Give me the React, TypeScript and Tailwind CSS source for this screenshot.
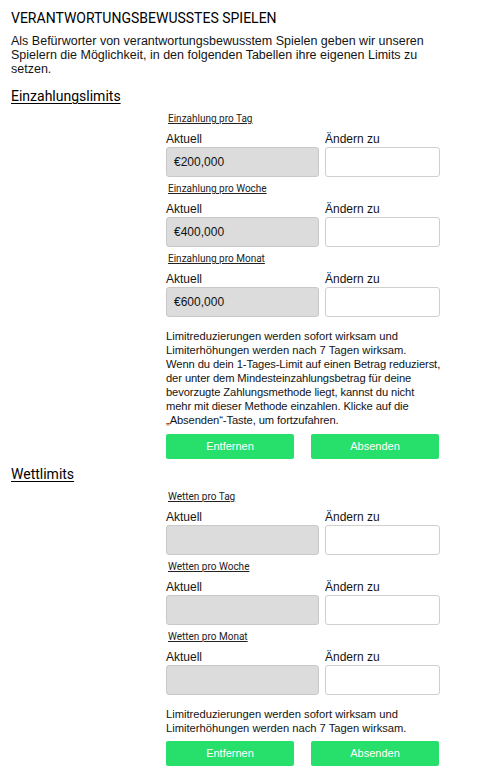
const roboto = { fontFamily: 'Roboto, "Liberation Sans", sans-serif' };

type Row = { label: string; current: string };

const LimitBlock = ({ label, current }: Row) => (
  <div className="pb-[5px]">
    <div className="pl-[2px] text-[10px] leading-[14px] underline text-[#222]" style={roboto}>
      {label}
    </div>
    <div className="mt-[6px] grid grid-cols-[153px_115px] gap-x-[6px] text-[12px] leading-[14px]">
      <div>Aktuell</div>
      <div>Ändern zu</div>
    </div>
    <div className="mt-[1px] grid grid-cols-[153px_115px] gap-x-[6px]">
      <div className="h-[30px] rounded-[3px] border border-[#c9c9c9] bg-[#dcdcdc] px-[7px] text-[12px] leading-[28px] text-[#111]">
        {current}
      </div>
      <input className="h-[30px] rounded-[3px] border border-[#cfcfcf] bg-white px-[7px] text-[12px] outline-none" />
    </div>
  </div>
);

const Buttons = () => (
  <div className="grid grid-cols-[128px_128px] gap-x-[17px]">
    <button className="h-[25px] rounded-[2px] bg-[#27e06c] text-[11px] font-medium text-white">Entfernen</button>
    <button className="h-[25px] rounded-[2px] bg-[#27e06c] text-[11px] font-medium text-white">Absenden</button>
  </div>
);

const Heading = ({ children, className }: { children: string; className: string }) => (
  <h2 className={`text-[14px] leading-[18px] text-black underline underline-offset-[2px] ${className}`} style={roboto}>
    {children}
  </h2>
);

const Note = ({ className = '' }: { className?: string }) => (
  <p className={`whitespace-nowrap text-[11.2px] leading-[14px] ${className}`}>
    Limitreduzierungen werden sofort wirksam und
    <br />
    Limiterhöhungen werden nach 7 Tagen wirksam.
  </p>
);

export default function App() {
  return (
    <div className="min-h-[772px] bg-white px-[11px] pt-[9px] text-[#141414]" style={{ fontFamily: '"Liberation Sans", Arial, sans-serif' }}>
      <h1 className="text-[14px] leading-[18px] text-black" style={roboto}>
        VERANTWORTUNGSBEWUSSTES SPIELEN
      </h1>
      <p className="mt-[7px] w-[430px] text-[12.5px] leading-[14px]">
        Als Befürworter von verantwortungsbewusstem Spielen geben wir unseren Spielern die Möglichkeit, in den folgenden
        Tabellen ihre eigenen Limits zu setzen.
      </p>

      <Heading className="mt-[11px]">Einzahlungslimits</Heading>
      <div className="ml-[155px] mt-[7px] w-[274px]">
        <LimitBlock label="Einzahlung pro Tag" current="€200,000" />
        <LimitBlock label="Einzahlung pro Woche" current="€400,000" />
        <LimitBlock label="Einzahlung pro Monat" current="€600,000" />
        <Note className="mt-[7px]" />
        <p className="whitespace-nowrap text-[11.2px] leading-[14px] tracking-[-0.1px]">
          Wenn du dein 1-Tages-Limit auf einen Betrag reduzierst,
          <br />
          der unter dem Mindesteinzahlungsbetrag für deine
          <br />
          bevorzugte Zahlungsmethode liegt, kannst du nicht
          <br />
          mehr mit dieser Methode einzahlen. Klicke auf die
          <br />
          „Absenden“-Taste, um fortzufahren.
        </p>
        <div className="mt-[7px]">
          <Buttons />
        </div>
      </div>

      <Heading className="mt-[6px]">Wettlimits</Heading>
      <div className="ml-[155px] mt-[7px] w-[274px]">
        <LimitBlock label="Wetten pro Tag" current="" />
        <LimitBlock label="Wetten pro Woche" current="" />
        <LimitBlock label="Wetten pro Monat" current="" />
        <Note className="mt-[7px]" />
        <div className="mt-[6px]">
          <Buttons />
        </div>
      </div>
    </div>
  );
}
